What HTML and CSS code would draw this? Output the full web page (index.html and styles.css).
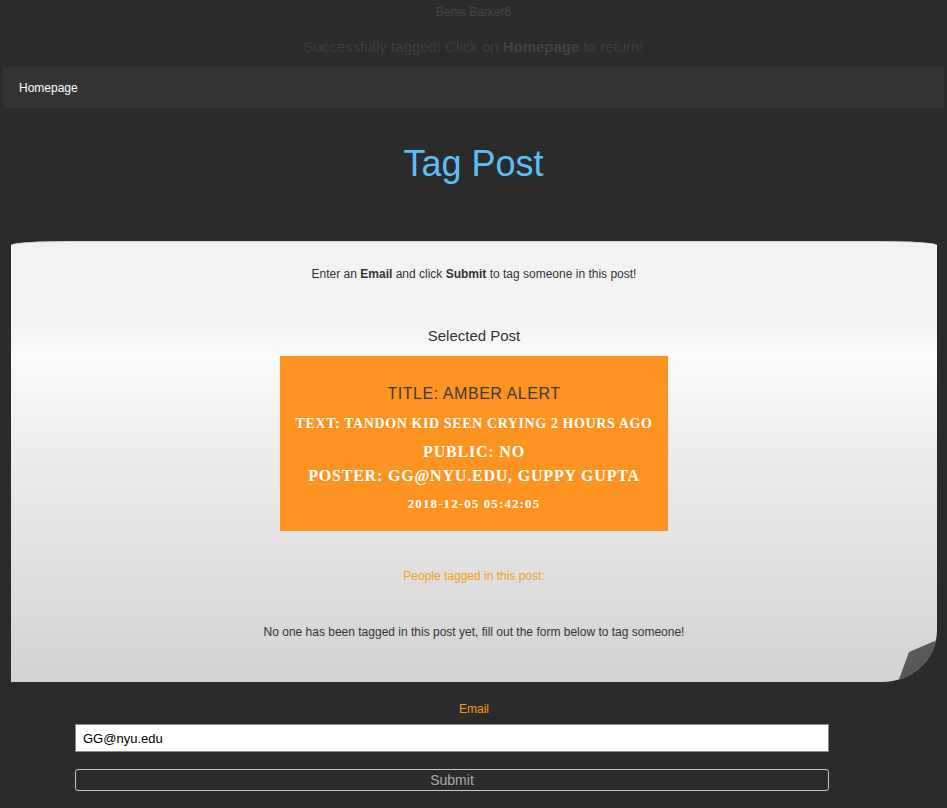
FILE: index.html
```html
<!DOCTYPE html>
<html>
<head>
<meta charset="utf-8">
<title>Tag Post</title>
<link rel="stylesheet" href="styles.css">
</head>
<body>
  <p class="user">Benis Barker6</p>
  <p class="flash">Successfully tagged! Click on <b>Homepage</b> to return!</p>
  <nav class="nav"><a class="nav-link" href="#">Homepage</a></nav>
  <h1 class="title">Tag Post</h1>
  <section class="card">
    <p class="intro">Enter an <b>Email</b> and click <b>Submit</b> to tag someone in this post!</p>
    <h2 class="selected">Selected Post</h2>
    <div class="post">
      <div class="post-title">TITLE: AMBER ALERT</div>
      <div class="post-text">TEXT: TANDON KID SEEN CRYING 2 HOURS AGO</div>
      <div class="post-public">PUBLIC: NO</div>
      <div class="post-poster">POSTER: GG@NYU.EDU, GUPPY GUPTA</div>
      <div class="post-date">2018-12-05 05:42:05</div>
    </div>
    <p class="tagged">People tagged in this post:</p>
    <p class="none">No one has been tagged in this post yet, fill out the form below to tag someone!</p>
  </section>
  <form class="form">
    <label class="label" for="email">Email</label>
    <input class="input" id="email" type="text" value="GG@nyu.edu">
    <button class="submit" type="button">Submit</button>
  </form>
</body>
</html>
```
FILE: styles.css
```css
html, body {
  margin: 0;
  padding: 0;
  background: #2b2b2b;
  font-family: "Liberation Sans", Arial, sans-serif;
}
body {
  padding: 0 3px;
}
.user {
  margin: 0;
  padding-top: 5px;
  height: 15px;
  line-height: 15px;
  text-align: center;
  font-size: 12px;
  color: #444;
}
.flash {
  margin: 0;
  padding-top: 18px;
  line-height: 18px;
  height: 29px;
  text-align: center;
  font-size: 15px;
  color: #3c3c3c;
}
.flash b {
  color: #424242;
}
.nav {
  height: 41px;
  background: #333333;
  display: flex;
  align-items: center;
  padding-left: 16px;
}
.nav-link {
  color: #fff;
  text-decoration: none;
  font-size: 12px;
}
.title {
  margin: 0;
  height: 133px;
  line-height: 112px;
  text-align: center;
  font-weight: normal;
  font-size: 36px;
  color: #5bbff7;
}
.card {
  margin: 0 7px 0 8px;
  height: 441px;
  box-sizing: border-box;
  position: relative;
  background: linear-gradient(to bottom, #f2f2f2 0%, #f3f3f3 18%, #fbfbfb 26%, #eeeeee 45%, #e2e2e2 70%, #d2d2d2 100%);
  border-radius: 60px 60px 55px 0 / 4px 4px 52px 0;
  border-top: 1px solid #d8d8d8;
  text-align: center;
  color: #333;
  padding-top: 25px;
}
.card::before {
  content: "";
  position: absolute;
  right: 0;
  bottom: 0;
  width: 55px;
  height: 52px;
  z-index: -1;
  border-radius: 0 0 55px 0 / 0 0 52px 0;
  box-shadow: 4px 4px 7px rgba(0, 0, 0, 0.45);
}
.card::after {
  content: "";
  position: absolute;
  right: 0;
  bottom: 0;
  width: 55px;
  height: 52px;
  border-radius: 0 0 55px 0 / 0 0 52px 0;
  background: linear-gradient(150deg, #666 0%, #585858 60%, #4e4e4e 100%);
  clip-path: polygon(27px 22px, 55px 10px, 55px 52px, 16px 52px);
}
.intro {
  margin: 0;
  font-size: 12px;
  line-height: 14px;
}
.selected {
  margin: 47px 0 0;
  font-size: 15px;
  font-weight: normal;
  line-height: 16px;
}
.post {
  width: 388px;
  height: 175px;
  margin: 12px auto 0;
  background: #fd9320;
  box-sizing: border-box;
  padding-top: 29px;
  font-family: "Liberation Serif", "Times New Roman", serif;
  font-weight: bold;
  color: #fff;
}
.post-title {
  font-family: "Liberation Sans", Arial, sans-serif;
  font-weight: normal;
  font-size: 16px;
  letter-spacing: 0.55px;
  color: #3a3a3a;
  line-height: 18px;
}
.post-text {
  margin-top: 13px;
  font-size: 14px;
  letter-spacing: 0.6px;
  line-height: 16px;
}
.post-public {
  margin-top: 11px;
  font-size: 16px;
  letter-spacing: 0.8px;
  line-height: 18px;
}
.post-poster {
  margin-top: 6px;
  font-size: 16px;
  letter-spacing: 0.8px;
  line-height: 18px;
}
.post-date {
  margin-top: 12px;
  font-size: 13px;
  letter-spacing: 1.1px;
  line-height: 14px;
}
.tagged {
  margin: 38px 0 0;
  font-size: 12px;
  line-height: 14px;
  color: #f5a020;
}
.none {
  margin: 42px 0 0;
  font-size: 12px;
  line-height: 14px;
}
.form {
  margin: 0 0 0 72px;
  width: 754px;
  display: flex;
  flex-direction: column;
  padding-top: 20px;
}
.label {
  align-self: center;
  margin-left: 44px;
  font-size: 12px;
  line-height: 14px;
  color: #fd9a00;
}
.input {
  margin-top: 8px;
  height: 28px;
  box-sizing: border-box;
  border: 1px solid #888;
  background: #fff;
  padding: 0 7px;
  font-family: "Liberation Sans", Arial, sans-serif;
  font-size: 13px;
  color: #000;
}
.submit {
  margin-top: 17px;
  height: 22px;
  box-sizing: border-box;
  border: 1px solid #c8c8c8;
  border-radius: 3px;
  background: transparent;
  font-family: "Liberation Sans", Arial, sans-serif;
  font-size: 14px;
  color: #aaa;
  padding: 0;
}
```
